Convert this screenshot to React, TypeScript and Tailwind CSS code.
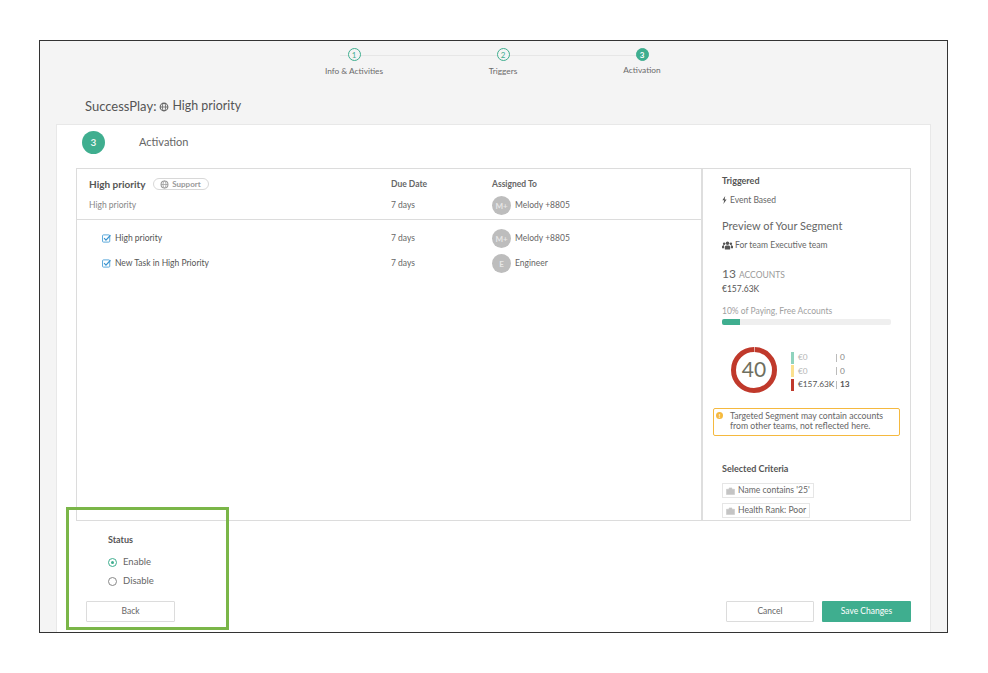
import React from "react";

const Globe = ({ s = 9, c = "#777" }: { s?: number; c?: string }) => (
  <svg width={s} height={s} viewBox="0 0 12 12" fill="none" stroke={c} strokeWidth="1.4" className="shrink-0">
    <circle cx="6" cy="6" r="4.6" />
    <ellipse cx="6" cy="6" rx="2" ry="4.6" strokeWidth="1" />
    <path d="M1.4 6h9.2" strokeWidth="1" />
  </svg>
);

const Step = ({ n, label, done, cls }: { n: number; label: string; done?: boolean; cls: string }) => (
  <div className={`flex flex-col items-center ${cls}`}>
    <div
      className={`z-10 flex h-[13px] w-[13px] items-center justify-center rounded-full border-[1.5px] border-[#3fae8f] text-[8px] leading-none ${
        done ? "bg-[#f4f4f4] text-[#3fae8f]" : "bg-[#3fae8f] font-bold text-white"
      }`}
    >
      {n}
    </div>
    <div className={`whitespace-nowrap text-[8.3px] leading-[10px] text-[#6b6b6b] ${done ? "mt-[5px]" : "mt-[4px]"}`}>{label}</div>
  </div>
);

const Avatar = ({ t }: { t: string }) => (
  <div className="flex h-[19px] w-[19px] shrink-0 items-center justify-center rounded-full bg-[#bdbdbd] text-[8px] font-bold text-[#e6e6e6]">
    {t}
  </div>
);

const Check = () => (
  <svg width="9" height="9" viewBox="0 0 10 10" fill="none" className="shrink-0">
    <rect x="0.6" y="1" width="8" height="8" rx="1" stroke="#4a9fd6" strokeWidth="1" />
    <path d="M2.3 4.6l2.1 2.2L9.4 1.4" stroke="#3a93d0" strokeWidth="1.3" />
  </svg>
);

const TaskRow = ({ title, avatar, who, cls }: { title: string; avatar: string; who: string; cls: string }) => (
  <div className={`flex h-[19px] items-center ${cls}`}>
    <div className="flex w-[314px] shrink-0 items-center gap-[4px] pl-[25px] text-[8.5px] text-[#555]">
      <Check />
      <span>{title}</span>
    </div>
    <div className="w-[101px] shrink-0 text-[8.5px] text-[#666]">7 days</div>
    <div className="flex items-center gap-[4px] text-[8.5px] text-[#666]">
      <Avatar t={avatar} />
      <span>{who}</span>
    </div>
  </div>
);

const Legend = ({ c, a, b, dark }: { c: string; a: string; b: string; dark?: boolean }) => (
  <div className="flex h-[13.5px] items-center text-[8.3px]">
    <div className="h-[12px] w-[3px]" style={{ background: c }} />
    <div className={`ml-[4px] w-[38px] whitespace-nowrap ${dark ? "text-[#555]" : "text-[#b5b5b5]"}`}>{a}</div>
    <div className="h-[8px] w-px bg-[#bbb]" />
    <div className={`ml-[3px] ${dark ? "font-bold text-[#555]" : "text-[#888]"}`}>{b}</div>
  </div>
);

const Chip = ({ t }: { t: string }) => (
  <div className="flex h-[15px] w-fit items-center gap-[3px] border border-[#e6e6e6] px-[3px] text-[8.6px] text-[#666]">
    <svg width="9" height="8" viewBox="0 0 10 9" className="shrink-0">
      <path d="M0.5 2.5h9v6h-9zM3.5 2.5V1h3v1.5" fill="#c4c4c4" stroke="#c4c4c4" strokeWidth="0.6" />
    </svg>
    <span>{t}</span>
  </div>
);

export default function App() {
  return (
    <div className="h-[673px] w-[988px] bg-white pl-[39px] pt-[40px]" style={{ fontFamily: "Lato, 'Open Sans', sans-serif" }}>
      <div className="relative flex h-[593px] w-[909px] flex-col overflow-hidden border border-[#333] bg-[#f4f4f4]">
        {/* stepper */}
        <div className="relative flex h-[33px] shrink-0 items-start pt-[7px]">
          <div className="absolute left-[300px] top-[14px] h-px w-[302px] bg-[#e6e6e6]" />
          <Step n={1} label="Info & Activities" done cls="ml-[284px] w-[60px]" />
          <Step n={2} label="Triggers" done cls="ml-[89px] w-[60px]" />
          <Step n={3} label="Activation" cls="ml-[79px] w-[60px]" />
        </div>
        {/* title */}
        <div className="flex h-[50px] shrink-0 items-center gap-[3px] pl-[45px] pt-[15px] text-[13px] text-[#555]">
          <span>SuccessPlay:</span>
          <Globe s={10} c="#666" />
          <span className="text-[12.4px]">High priority</span>
        </div>
        {/* card */}
        <div className="ml-[16px] flex min-h-0 w-[875px] flex-1 flex-col border border-b-0 border-[#e8e8e8] bg-white">
          <div className="flex h-[43px] shrink-0 items-center pb-[8px] pl-[25px]">
            <div className="flex h-[23px] w-[23px] items-center justify-center rounded-full bg-[#3fae8f] text-[10px] font-bold text-[#e8f5f1]">3</div>
            <div className="ml-[34px] text-[11px] text-[#666]">Activation</div>
          </div>
          <div className="ml-[19px] flex h-[353px] w-[835px] shrink-0 border border-[#dcdcdc]">
            {/* left */}
            <div className="w-[626px] shrink-0 border-r-2 border-[#dedede]">
              <div className="h-[51px] border-b border-[#dcdcdc]">
                <div className="flex h-[27px] items-center pt-[3px]">
                  <div className="flex w-[314px] shrink-0 items-center pl-[12px]">
                    <span className="text-[10px] font-bold text-[#555]">High priority</span>
                    <span className="ml-[7px] flex h-[12px] w-[56px] items-center justify-center gap-[3px] rounded-full border border-[#d8d8d8] text-[8px] font-bold text-[#999]">
                      <Globe s={9} c="#999" />
                      Support
                    </span>
                  </div>
                  <div className="w-[101px] shrink-0 text-[8.5px] font-bold text-[#666]">Due Date</div>
                  <div className="text-[8.5px] font-bold text-[#666]">Assigned To</div>
                </div>
                <div className="flex h-[19px] items-center">
                  <div className="w-[314px] shrink-0 pl-[12px] text-[8.5px] text-[#888]">High priority</div>
                  <div className="w-[101px] shrink-0 text-[8.5px] text-[#666]">7 days</div>
                  <div className="flex items-center gap-[4px] text-[8.5px] text-[#666]">
                    <Avatar t="M+" />
                    <span>Melody +8805</span>
                  </div>
                </div>
              </div>
              <div>
                <TaskRow title="High priority" avatar="M+" who="Melody +8805" cls="mt-[9px]" />
                <TaskRow title="New Task in High Priority" avatar="E" who="Engineer" cls="mt-[6px]" />
              </div>
            </div>
            {/* right */}
            <div className="min-w-0 flex-1 overflow-hidden pl-[19px] pt-[6px]">
              <div className="text-[9px] font-bold leading-[12px] text-[#555]">Triggered</div>
              <div className="mt-[7px] flex items-center gap-[3px] text-[8.5px] leading-[12px] text-[#666]">
                <svg width="5" height="8" viewBox="0 0 5 8"><path d="M3.2 0L0.4 4.2h1.8L1.4 8l3.2-4.6H2.7z" fill="#555" /></svg>
                Event Based
              </div>
              <div className="mt-[13px] text-[11px] leading-[14px] text-[#666]">Preview of Your Segment</div>
              <div className="mt-[6px] flex items-center gap-[2px] text-[8.5px] leading-[12px] text-[#666]">
                <svg width="11" height="9" viewBox="0 0 10 8" fill="#555">
                  <circle cx="5" cy="2" r="1.6" /><circle cx="1.9" cy="2.4" r="1.1" /><circle cx="8.1" cy="2.4" r="1.1" />
                  <path d="M2.6 7.6V5.4C2.6 4.4 3.6 4 5 4s2.4.4 2.4 1.4v2.2zM0 6.4V5c0-.8.6-1.3 1.9-1.3L2 6.4zM10 6.4V5c0-.8-.6-1.3-1.9-1.3L8 6.4z" />
                </svg>
                For team Executive team
              </div>
              <div className="mt-[16px] flex items-baseline gap-[3px] leading-[13px] text-[#777]">
                <span className="text-[12px] text-[#666]">13</span>
                <span className="text-[8.5px] text-[#999]">ACCOUNTS</span>
              </div>
              <div className="mt-[1px] text-[8.5px] leading-[12px] text-[#555]">€157.63K</div>
              <div className="mt-[10px] text-[8.5px] leading-[12px] text-[#a0a0a0]">10% of Paying, Free Accounts</div>
              <div className="mt-[2px] h-[6px] w-[169px] rounded-[2px] bg-[#efefef]">
                <div className="h-full w-[18px] rounded-l-[2px] bg-[#3fae8f]" />
              </div>
              <div className="mt-[21px] flex items-center pl-[8px]">
                <svg width="48" height="48" viewBox="0 0 48 48" className="shrink-0">
                  <circle cx="24" cy="24" r="20.5" fill="none" stroke="#c0392b" strokeWidth="5" strokeDasharray="127.5 1.3" strokeDashoffset="-0.6" transform="rotate(-90 24 24)" />
                  <text x="24" y="31" textAnchor="middle" fontSize="21" fill="#6f6f60">40</text>
                </svg>
                <div className="ml-[13px] mt-[2px] flex flex-col">
                  <Legend c="#8fd3bd" a="€0" b="0" />
                  <Legend c="#fbe08e" a="€0" b="0" />
                  <Legend c="#c0392b" a="€157.63K" b="13" dark />
                </div>
              </div>
              <div className="relative -ml-[9px] mt-[14px] h-[28px] w-[187px] rounded-[2px] border border-[#f5b93f] pl-[16px] pt-[2px] text-[8.7px] leading-[10px] text-[#666]">
                <div className="absolute left-[2px] top-[3px] flex h-[7px] w-[7px] items-center justify-center rounded-full bg-[#f5b93f] text-[6px] font-bold leading-none text-white">!</div>
                Targeted Segment may contain accounts from other teams, not reflected here.
              </div>
              <div className="mt-[27px] text-[9px] font-bold leading-[12px] text-[#555]">Selected Criteria</div>
              <div className="mt-[8px] flex flex-col gap-[5px]">
                <Chip t="Name contains '25'" />
                <Chip t="Health Rank: Poor" />
              </div>
            </div>
          </div>
          {/* bottom */}
          <div className="flex min-h-0 flex-1 items-start justify-between pl-[29px] pr-[19px]">
            <div className="flex flex-col">
              <div className="ml-[22px] mt-[13px] text-[9px] font-bold leading-[12px] text-[#555]">Status</div>
              <div className="ml-[22px] mt-[10px] flex h-[12px] items-center gap-[6px] text-[9.5px] text-[#666]">
                <span className="flex h-[9px] w-[9px] items-center justify-center rounded-full border border-[#3fae8f]">
                  <span className="h-[3px] w-[3px] rounded-full bg-[#3fae8f]" />
                </span>
                Enable
              </div>
              <div className="ml-[22px] mt-[7px] flex h-[12px] items-center gap-[6px] text-[9.5px] text-[#666]">
                <span className="h-[9px] w-[9px] rounded-full border border-[#888]" />
                Disable
              </div>
              <button className="mt-[14px] h-[21px] w-[89px] rounded-[1px] border border-[#dcdcdc] bg-white text-[8.5px] text-[#666]">Back</button>
            </div>
            <div className="mt-[80px] flex gap-[8px]">
              <button className="h-[21px] w-[88px] rounded-[1px] border border-[#dcdcdc] bg-white text-[8.5px] text-[#666]">Cancel</button>
              <button className="h-[21px] w-[89px] rounded-[1px] bg-[#3fae8f] text-[8.5px] text-white">Save Changes</button>
            </div>
          </div>
        </div>
        {/* highlight annotation */}
        <div className="absolute left-[26px] top-[466px] h-[123px] w-[163px] border-[3px] border-[#7ab648]" />
      </div>
    </div>
  );
}
